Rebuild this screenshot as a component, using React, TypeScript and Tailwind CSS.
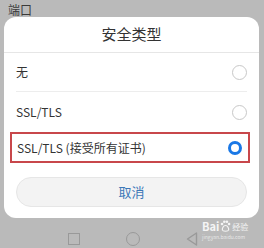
import React from 'react'

const font = { fontFamily: '"Noto Sans CJK SC", "Liberation Sans", sans-serif' }

function Radio({ checked }: { checked?: boolean }) {
  if (checked) {
    return <div className="w-[14px] h-[14px] rounded-full border-[3.5px] border-[#1a78e6] bg-white" />
  }
  return <div className="w-[15px] h-[15px] rounded-full border border-[#c8c8c8] bg-white" />
}

function Paw() {
  return (
    <svg width="11" height="12" viewBox="0 0 11 12" className="mx-[1px]">
      <circle cx="2" cy="4" r="1.3" fill="white" fillOpacity="0.85" />
      <circle cx="4.3" cy="1.8" r="1.3" fill="white" fillOpacity="0.85" />
      <circle cx="6.9" cy="1.8" r="1.3" fill="white" fillOpacity="0.85" />
      <circle cx="9.1" cy="4" r="1.3" fill="white" fillOpacity="0.85" />
      <path d="M5.5 5.5 C3.3 5.5 2 8.6 2.4 10.2 C2.8 11.6 8.2 11.6 8.6 10.2 C9 8.6 7.7 5.5 5.5 5.5 Z" fill="none" stroke="white" strokeOpacity="0.85" strokeWidth="1.2" />
    </svg>
  )
}

export default function App() {
  return (
    <div className="w-[264px] h-[248px] bg-[#bababa] overflow-hidden relative" style={font}>
      <div className="h-[17px] pl-[8px] pt-[2px] text-[12px] leading-[15px] text-[#3a3a3a]">端口</div>

      <div className="mx-[4px] w-[255px] h-[201px] bg-white rounded-[12px] flex flex-col">
        <div className="h-[35px] flex items-center justify-center text-[15px] text-[#333]">安全类型</div>
        <div className="h-px bg-[#e6e6e6]" />

        <div className="h-[38px] px-[12px] flex items-center justify-between text-[12px] text-[#333]">
          <span>无</span>
          <Radio />
        </div>
        <div className="mx-[12px] h-px bg-[#ededed]" />
        <div className="h-[40px] px-[12px] flex items-center justify-between text-[12px] text-[#333]">
          <span>SSL/TLS</span>
          <Radio />
        </div>

        <div className="ml-[6px] mr-[9px] h-[31px] border-2 border-[#c8474b] pl-[5px] pr-[6px] flex items-center justify-between text-[12px] text-[#333]">
          <span>SSL/TLS (接受所有证书)</span>
          <Radio checked />
        </div>

        <div className="mx-[12px] mt-[14px] h-[30px] rounded-full bg-[#f3f3f3] border border-[#e6e6e6] flex items-center justify-center text-[13px] text-[#3c78b8]">
          取消
        </div>
      </div>

      <div className="h-[30px] flex items-center justify-center gap-[46px] pt-[12px] pl-[2px]">
        <div className="w-[12px] h-[12px] border-[1.5px] border-[#999]" />
        <div className="w-[14px] h-[14px] rounded-full border-[1.5px] border-[#999]" />
        <svg width="12" height="14" viewBox="0 0 12 14">
          <path d="M10.5 1 L1.5 7 L10.5 13 Z" fill="none" stroke="#999" strokeWidth="1.4" strokeLinejoin="round" />
        </svg>
      </div>

      <div className="absolute left-[202px] top-[219px] flex flex-col items-start text-white/85">
        <div className="flex items-end h-[13px]">
          <span className="text-[11px] leading-[12px] font-bold">Bai</span>
          <Paw />
          <span className="text-[8px] leading-[10px]">经验</span>
        </div>
        <div className="mt-[2px] text-[5px] leading-[6px] text-white/70">jingyan.baidu.com</div>
      </div>
    </div>
  )
}
